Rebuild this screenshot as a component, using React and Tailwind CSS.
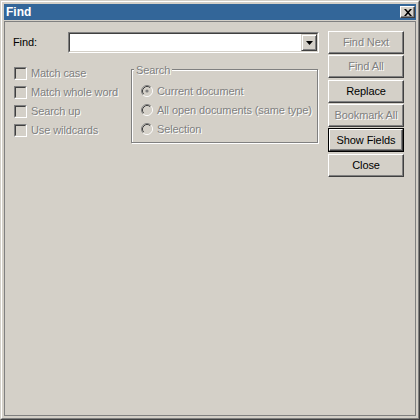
import React from 'react';

const disabledText = 'text-[#808080] [text-shadow:1px_1px_0_#ffffff]';

const CheckBox = ({ label }) => (
  <div className="flex h-[13px] items-center gap-[4px]">
    <div className="h-[13px] w-[13px] border border-t-[#808080] border-l-[#808080] border-r-white border-b-white">
      <div className="h-full w-full border border-t-[#404040] border-l-[#404040] border-r-[#d4d0c8] border-b-[#d4d0c8] bg-[#d4d0c8]" />
    </div>
    <span className={`leading-[13px] ${disabledText}`}>{label}</span>
  </div>
);

const Radio = ({ label, checked }) => (
  <div className="flex h-[12px] items-center gap-[4px]">
    <svg width="12" height="12" viewBox="0 0 12 12" className="shrink-0">
      <circle cx="6" cy="6" r="4.5" fill="#d4d0c8" />
      <path d="M2.11 9.89 A5.5 5.5 0 0 1 9.89 2.11" fill="none" stroke="#808080" strokeWidth="1" />
      <path d="M9.89 2.11 A5.5 5.5 0 0 1 2.11 9.89" fill="none" stroke="#ffffff" strokeWidth="1" />
      <path d="M2.82 9.18 A4.5 4.5 0 0 1 9.18 2.82" fill="none" stroke="#404040" strokeWidth="1" />
      <path d="M9.18 2.82 A4.5 4.5 0 0 1 2.82 9.18" fill="none" stroke="#d4d0c8" strokeWidth="1" />
      {checked && <circle cx="6" cy="6" r="1.6" fill="#808080" />}
    </svg>
    <span className={`leading-[13px] ${disabledText}`}>{label}</span>
  </div>
);

const Button = ({ children, disabled, isDefault, className = '' }) => {
  const face = (
    <div className="flex h-full w-full items-center justify-center border border-t-white border-l-white border-r-[#404040] border-b-[#404040] shadow-[inset_-1px_-1px_0_#808080]">
      <span className={disabled ? disabledText : 'text-black'}>{children}</span>
    </div>
  );
  if (isDefault) {
    return (
      <div className={`h-[24px] w-[76px] border border-black ${className}`}>{face}</div>
    );
  }
  return <div className={`h-[23px] w-[76px] ${className}`}>{face}</div>;
};

export default function App() {
  return (
    <div className="h-[420px] w-[420px] border border-t-[#d4d0c8] border-l-[#d4d0c8] border-r-[#404040] border-b-[#404040] bg-[#d4d0c8] font-['Liberation_Sans',Arial,sans-serif] text-[11px] tracking-[-0.1px] select-none">
      <div className="flex h-full flex-col border border-t-white border-l-white border-r-[#808080] border-b-[#808080] p-[2px]">
        {/* title bar */}
        <div className="flex h-[16px] items-center justify-between bg-[#336699] pl-[2px] pr-[1px]">
          <span className="text-[12px] font-bold leading-[16px] tracking-normal text-white">Find</span>
          <div className="flex h-[12px] w-[15px] items-center justify-center border border-t-white border-l-white border-r-[#404040] border-b-[#404040] bg-[#d4d0c8] shadow-[inset_-1px_-1px_0_#808080]">
            <svg width="8" height="7" viewBox="0 0 8 7">
              <path d="M0 0h2l2 2.2L6 0h2L5 3.5 8 7H6L4 4.8 2 7H0l3-3.5z" fill="#000" />
            </svg>
          </div>
        </div>

        {/* client area */}
        <div className="mt-[1px] flex-1 border border-[#808080]">
          <div className="flex pl-[8px] pt-[9px]">
            <div className="w-[306px]">
              <div className="mt-[1px] flex h-[21px] items-center">
                <span className="w-[55px] text-black">Find:</span>
                <div className="h-[21px] w-[251px] border border-t-[#808080] border-l-[#808080] border-r-white border-b-white">
                  <div className="flex h-full w-full justify-end border border-t-[#404040] border-l-[#404040] border-r-[#d4d0c8] border-b-[#d4d0c8] bg-white">
                    <div className="flex h-[17px] w-[16px] items-center justify-center border border-t-[#d4d0c8] border-l-[#d4d0c8] border-r-[#404040] border-b-[#404040] bg-[#d4d0c8] shadow-[inset_1px_1px_0_#ffffff,inset_-1px_-1px_0_#808080]">
                      <svg width="7" height="4" viewBox="0 0 7 4">
                        <path d="M0 0h7L3.5 4z" fill="#000" />
                      </svg>
                    </div>
                  </div>
                </div>
              </div>

              <div className="mt-[14px] flex">
                <div className="ml-[1px] flex w-[117px] flex-col gap-[6px]">
                  <CheckBox label="Match case" />
                  <CheckBox label="Match whole word" />
                  <CheckBox label="Search up" />
                  <CheckBox label="Use wildcards" />
                </div>

                <div className="relative mt-[2px] h-[74px] w-[187px] border border-[#808080] shadow-[inset_1px_1px_0_#ffffff,1px_1px_0_#ffffff]">
                  <span className={`absolute left-[2px] top-[-6px] bg-[#d4d0c8] px-[2px] leading-[13px] ${disabledText}`}>
                    Search
                  </span>
                  <div className="flex flex-col gap-[7px] pl-[9px] pt-[15px]">
                    <Radio label="Current document" checked />
                    <Radio label="All open documents (same type)" />
                    <Radio label="Selection" />
                  </div>
                </div>
              </div>
            </div>

            <div className="ml-[9px] flex w-[76px] flex-col">
              <Button disabled>Find Next</Button>
              <Button disabled className="mt-[1px]">Find All</Button>
              <Button className="mt-[2px]">Replace</Button>
              <Button disabled className="mt-[1px]">Bookmark All</Button>
              <Button isDefault className="mt-[1px]">Show Fields</Button>
              <Button className="mt-[2px]">Close</Button>
            </div>
          </div>
        </div>
      </div>
    </div>
  );
}
